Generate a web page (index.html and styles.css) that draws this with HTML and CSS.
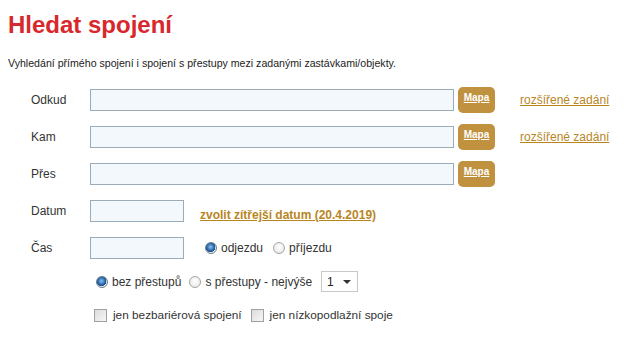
FILE: index.html
```html
<!DOCTYPE html>
<html lang="cs">
<head>
<meta charset="utf-8">
<link rel="stylesheet" href="styles.css">
</head>
<body>
<h1 class="title">Hledat spojení</h1>
<p class="intro">Vyhledání přímého spojení i spojení s přestupy mezi zadanými zastávkami/objekty.</p>
<form class="form">
  <div class="row">
    <span class="label">Odkud</span>
    <span class="input wide"></span>
    <a class="mapa">Mapa</a>
    <a class="ext">rozšířené zadání</a>
  </div>
  <div class="row">
    <span class="label">Kam</span>
    <span class="input wide"></span>
    <a class="mapa">Mapa</a>
    <a class="ext">rozšířené zadání</a>
  </div>
  <div class="row">
    <span class="label">Přes</span>
    <span class="input wide"></span>
    <a class="mapa">Mapa</a>
  </div>
  <div class="row">
    <span class="label">Datum</span>
    <span class="input short"></span>
    <a class="tomorrow">zvolit zítřejší datum (20.4.2019)</a>
  </div>
  <div class="row">
    <span class="label">Čas</span>
    <span class="input short"></span>
    <span class="radios">
      <span class="opt"><span class="radio on"></span>odjezdu</span>
      <span class="opt"><span class="radio"></span>příjezdu</span>
    </span>
  </div>
  <div class="row transfers">
    <span class="opt"><span class="radio on"></span>bez přestupů</span>
    <span class="opt"><span class="radio"></span>s přestupy - nejvýše</span>
    <span class="select">1<span class="arrow"></span></span>
  </div>
  <div class="row checks">
    <span class="opt"><span class="check"></span>jen bezbariérová spojení</span>
    <span class="opt"><span class="check"></span>jen nízkopodlažní spoje</span>
  </div>
</form>
</body>
</html>
```
FILE: styles.css
```css
* { box-sizing: border-box; }
body {
  margin: 0;
  padding: 0 8px;
  background: #fff;
  font-family: "Liberation Sans", Arial, sans-serif;
  color: #333;
}
.title {
  margin: 11px 0 0;
  font-size: 24px;
  line-height: 28px;
  font-weight: bold;
  color: #d8282c;
}
.intro {
  margin: 18px 0 0;
  font-size: 10.6px;
  line-height: 12px;
  color: #222;
}
.form {
  margin-top: 18px;
  padding-left: 23px;
}
.row {
  display: flex;
  align-items: center;
  height: 26px;
  margin-bottom: 11px;
  font-size: 12px;
}
.label {
  width: 59px;
  font-size: 12px;
  color: #333;
}
.input {
  height: 22px;
  border: 1px solid #9babb8;
  background: #f2f8fc;
}
.input.wide { width: 364px; }
.input.short { width: 94px; }
.mapa {
  margin-left: 4px;
  width: 37px;
  height: 26px;
  border-radius: 5px;
  background: #c0913f;
  color: #fff;
  font-size: 10px;
  font-weight: bold;
  text-decoration: underline;
  text-align: center;
  padding-top: 5px;
  line-height: 12px;
  align-self: flex-start;
}
.ext {
  margin-left: 25px;
  color: #b8861f;
  text-decoration: underline;
  font-size: 12px;
}
.tomorrow {
  margin-left: 16px;
  color: #b8861f;
  text-decoration: underline;
  font-weight: bold;
  font-size: 12px;
  margin-top: 8px;
}
.radios { display: flex; margin-left: 21px; gap: 10px; }
.opt { display: flex; align-items: center; font-size: 12px; color: #333; }
.radio {
  width: 12px;
  height: 12px;
  border-radius: 50%;
  border: 1px solid #a4a4a4;
  background: radial-gradient(circle at 50% 40%, #fff 0, #e4e4e4 100%);
  margin-right: 4px;
}
.radio.on {
  border-color: #6a7b8c;
  background: radial-gradient(circle at 45% 40%, #8fc3f2 0, #2766a8 45%, #1c4d85 60%, #e9eef3 62%, #fff 100%);
}
.transfers { padding-left: 65px; gap: 8px; margin-top: -2px; height: 23px; }
.select {
  margin-left: 1px;
  width: 37px;
  height: 21px;
  border: 1px solid #c9c9c9;
  background: #fff;
  font-size: 12px;
  padding-left: 5px;
  display: flex;
  align-items: center;
  position: relative;
  color: #222;
}
.arrow {
  position: absolute;
  right: 6px;
  top: 8px;
  border-left: 4px solid transparent;
  border-right: 4px solid transparent;
  border-top: 4px solid #333;
}
.checks { padding-left: 63px; gap: 9px; margin-top: 12px; height: 20px; }
.check {
  width: 13px;
  height: 13px;
  border: 1px solid #a0a0a0;
  background: linear-gradient(135deg, #dcdcdc, #f6f6f6);
  margin-right: 6px;
}
.checks .opt { font-size: 11.8px; }
```
